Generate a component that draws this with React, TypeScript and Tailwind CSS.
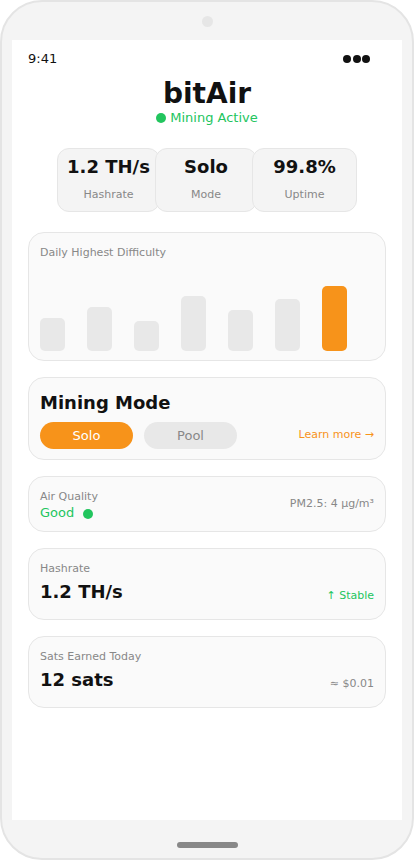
import React from "react";

const bars = [33, 44, 30, 55, 41, 52, 65];

function StatCard({ value, label, w, first }: { value: string; label: string; w: string; first?: boolean }) {
  return (
    <div
      className={`${w} ${first ? "" : "-ml-[5px]"} h-[64px] rounded-xl border border-[#e6e6e6] bg-[#f4f4f4] flex flex-col items-center pt-[6px]`}
    >
      <div className="text-[18px] leading-[24px] font-bold text-[#111]">{value}</div>
      <div className="mt-[8px] text-[11px] leading-[16px] text-[#888]">{label}</div>
    </div>
  );
}

function MetricCard({ label, value, right }: { label: string; value: string; right: React.ReactNode }) {
  return (
    <div className="rounded-2xl border border-[#e6e6e6] bg-[#fafafa] px-[11px] pt-3 pb-[12px]">
      <div className="text-[11px] leading-[16px] text-[#888]">{label}</div>
      <div className="flex items-end justify-between">
        <div className="text-[18px] leading-[30px] font-bold text-[#111]">{value}</div>
        <div className="mb-[3px]">{right}</div>
      </div>
    </div>
  );
}

export default function App() {
  return (
    <div
      className="w-[414px] h-[860px] bg-white"
      style={{ fontFamily: '"DejaVu Sans", "Liberation Sans", sans-serif' }}
    >
      <div className="w-[414px] h-[860px] rounded-[42px] border-2 border-[#e4e4e4] bg-[#f4f4f4] flex flex-col items-center">
        <div className="h-[38px] flex items-center justify-center">
          <div className="w-[11px] h-[11px] rounded-full bg-[#e6e6e6]" />
        </div>
        <div className="w-[390px] h-[780px] bg-white flex flex-col">
          {/* status bar */}
          <div className="flex items-center justify-between pl-4 pr-8 pt-[11px]">
            <div className="text-[13px] leading-[15px] text-[#111]">9:41</div>
            <div className="flex gap-[1.5px]">
              <div className="w-[8px] h-[8px] rounded-full bg-[#111]" />
              <div className="w-[8px] h-[8px] rounded-full bg-[#111]" />
              <div className="w-[8px] h-[8px] rounded-full bg-[#111]" />
            </div>
          </div>
          {/* title */}
          <div className="mt-[12px] flex flex-col items-center">
            <div className="text-[28px] leading-[32px] font-bold text-[#111]">bitAir</div>
            <div className="flex items-center gap-[4px] text-[13px] leading-[15px] text-[#22c55e]">
              <div className="w-[10px] h-[10px] rounded-full bg-[#22c55e]" />
              <span>Mining Active</span>
            </div>
          </div>
          {/* stats */}
          <div className="mt-[23px] flex justify-center">
            <StatCard first w="w-[103px]" value="1.2 TH/s" label="Hashrate" />
            <StatCard w="w-[102px]" value="Solo" label="Mode" />
            <StatCard w="w-[105px]" value="99.8%" label="Uptime" />
          </div>
          {/* cards */}
          <div className="mt-[20px] px-4 flex flex-col gap-4">
            <div className="rounded-2xl border border-[#e6e6e6] bg-[#fafafa] px-[11px] pt-3 pb-[9px]">
              <div className="text-[11px] leading-[16px] text-[#888]">Daily Highest Difficulty</div>
              <div className="h-[90px] flex items-end gap-[22px]">
                {bars.map((h, i) => (
                  <div
                    key={i}
                    className={`w-[25px] rounded-[5px] ${i === bars.length - 1 ? "bg-[#f7931a]" : "bg-[#e8e8e8]"}`}
                    style={{ height: h }}
                  />
                ))}
              </div>
            </div>

            <div className="rounded-2xl border border-[#e6e6e6] bg-[#fafafa] px-[11px] pt-3 pb-[10px]">
              <div className="text-[18px] leading-[26px] font-bold text-[#111]">Mining Mode</div>
              <div className="mt-[6px] flex items-center">
                <div className="w-[93px] h-[27px] rounded-full bg-[#f7931a] text-white text-[13px] flex items-center justify-center">
                  Solo
                </div>
                <div className="ml-[11px] w-[93px] h-[27px] rounded-full bg-[#e8e8e8] text-[#888] text-[13px] flex items-center justify-center">
                  Pool
                </div>
                <div className="ml-auto text-[11px] text-[#f7931a]">Learn more →</div>
              </div>
            </div>

            <div className="rounded-2xl border border-[#e6e6e6] bg-[#fafafa] px-[11px] pt-3 pb-[11px] flex items-center justify-between">
              <div>
                <div className="text-[11px] leading-[16px] text-[#888]">Air Quality</div>
                <div className="flex items-center text-[13px] leading-[15px] text-[#22c55e]">
                  <span>Good</span>
                  <div className="ml-[9px] w-[10px] h-[10px] rounded-full bg-[#22c55e] mt-[2px]" />
                </div>
              </div>
              <div className="text-[11px] text-[#888]">PM2.5: 4 µg/m³</div>
            </div>

            <MetricCard
              label="Hashrate"
              value="1.2 TH/s"
              right={<div className="text-[11px] leading-[16px] text-[#22c55e]">↑ Stable</div>}
            />
            <MetricCard
              label="Sats Earned Today"
              value="12 sats"
              right={<div className="text-[11px] leading-[16px] text-[#888]">≈ $0.01</div>}
            />
          </div>
        </div>
        <div className="flex-1 flex items-center justify-center">
          <div className="w-[61px] h-[6px] rounded-full bg-[#888] mt-[12px]" />
        </div>
      </div>
    </div>
  );
}
